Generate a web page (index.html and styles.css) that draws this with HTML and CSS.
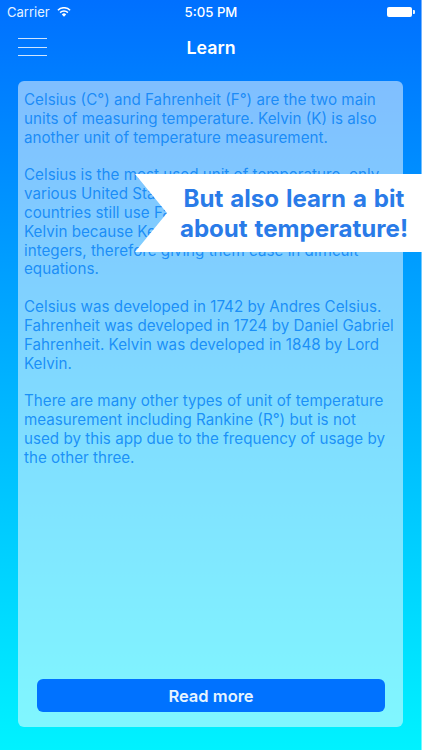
FILE: index.html
```html
<!DOCTYPE html>
<html lang="en">
<head>
<meta charset="utf-8">
<title>Learn</title>
<link rel="stylesheet" href="styles.css">
</head>
<body>
<div class="screen">
  <div class="status">
    <div class="status-left">
      <span>Carrier</span>
      <svg class="wifi" viewBox="0 0 14 10" width="14" height="10"><path d="M7 9.8 4.8 7.4a3.1 3.1 0 0 1 4.4 0Z" fill="#fff"/><path d="M3.1 5.6a5.6 5.6 0 0 1 7.8 0M.9 3.2a8.7 8.7 0 0 1 12.2 0" fill="none" stroke="#fff" stroke-width="1.5"/></svg>
    </div>
    <div class="status-time">5:05 PM</div>
    <div class="status-right">
      <span class="battery"></span><span class="battery-tip"></span>
    </div>
  </div>
  <header class="nav">
    <div class="menu"><span></span><span></span><span></span></div>
    <h1>Learn</h1>
  </header>
  <main class="card">
    <div class="copy">
      <p>Celsius (C°) and Fahrenheit (F°) are the two main units of measuring temperature. Kelvin (K) is also another unit of temperature measurement.</p>
      <p>Celsius is the most used unit of temperature, only various United States territories and a few other countries still use Fahrenheit. Scientists prefer Kelvin because Kelvin does not go below zero integers, therefore giving them ease in difficult equations.</p>
      <p>Celsius was developed in 1742 by Andres Celsius. Fahrenheit was developed in 1724 by Daniel Gabriel Fahrenheit. Kelvin was developed in 1848 by Lord Kelvin.</p>
      <p>There are many other types of unit of temperature measurement including Rankine (R°) but is not used by this app due to the frequency of usage by the other three.</p>
    </div>
    <button class="more">Read more</button>
  </main>
  <div class="banner">But also learn a bit<br>about temperature!</div>
</div>
</body>
</html>
```
FILE: styles.css
```css
* { box-sizing: border-box; }
html, body { margin: 0; padding: 0; }
body { font-family: Inter, "Liberation Sans", sans-serif; }
.screen {
  position: relative;
  width: 422px;
  height: 750px;
  overflow: hidden;
  display: flex;
  flex-direction: column;
  color: #fff;
  background: linear-gradient(180deg, #0070ff 0%, #00f2ff 100%);
  box-shadow: inset -1px 0 0 rgba(255, 255, 255, 0.45);
}
.status {
  height: 24px;
  padding: 0 7px;
  display: grid;
  grid-template-columns: 1fr auto 1fr;
  align-items: center;
  font-size: 13px;
}
.status-left { display: flex; align-items: center; gap: 7px; color: #e6f2ff; }
.status-time { font-weight: 500; font-size: 13.2px; }
.status-right { display: flex; align-items: center; justify-content: flex-end; }
.battery { width: 25px; height: 10px; background: #fff; border-radius: 2px; }
.battery-tip { width: 2px; height: 4px; background: #e6f2ff; border-radius: 0 1px 1px 0; margin-left: 1px; }
.nav {
  position: relative;
  height: 47px;
  display: flex;
  align-items: center;
  justify-content: center;
}
.nav h1 { margin: 0; font-size: 17.8px; font-weight: 600; }
.menu {
  position: absolute;
  left: 18px;
  top: 14px;
  width: 29px;
  height: 18px;
  display: flex;
  flex-direction: column;
  justify-content: space-between;
}
.menu span { height: 1px; background: #cfe5ff; }
.card {
  margin: 10px 0 0 18px;
  width: 385px;
  height: 646px;
  padding: 10px 19px 15px 6px;
  border-radius: 6px;
  background: rgba(255, 255, 255, 0.5);
  display: flex;
  flex-direction: column;
}
.copy {
  flex: 1;
  font-size: 15.2px;
  line-height: 18.8px;
  color: rgba(0, 125, 245, 0.8);
  width: 370px;
}
.copy p { margin: 0 0 19px; }
.more {
  margin-left: 13px;
  width: 348px;
  height: 33px;
  border: 0;
  border-radius: 6px;
  background: #0072ff;
  color: #e6f4ff;
  font: 600 16.5px Inter, "Liberation Sans", sans-serif;
}
.banner {
  position: absolute;
  left: 135px;
  top: 174px;
  width: 287px;
  height: 78px;
  padding: 10px 0 0 31px;
  background: #fff;
  clip-path: polygon(0 0, 100% 0, 100% 100%, 0 100%, 32px 50%);
  color: #2a7be8;
  font-size: 24.1px;
  font-weight: 700;
  line-height: 30px;
  word-spacing: 1.2px;
  text-align: center;
}
```
